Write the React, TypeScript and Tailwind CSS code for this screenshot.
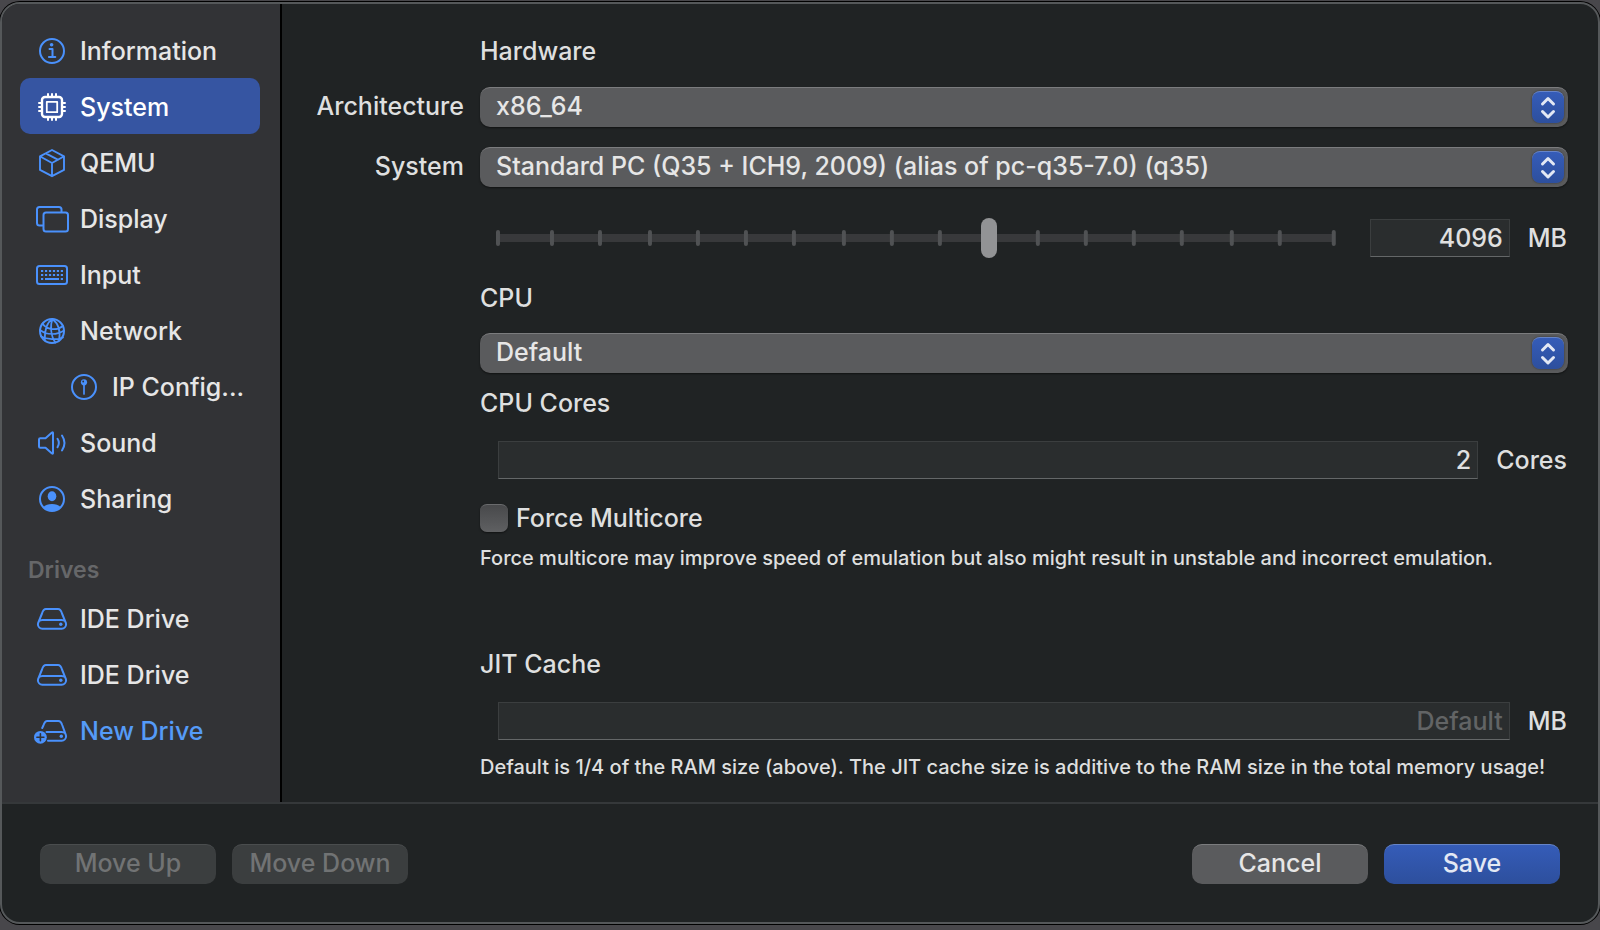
import type { ComponentType, ReactNode } from "react";

function Svg({ children }: { children: ReactNode }) {
  return (
    <svg
      width="36"
      height="32"
      viewBox="0 0 36 32"
      fill="none"
      stroke="currentColor"
      strokeWidth="2"
      strokeLinecap="round"
      strokeLinejoin="round"
      aria-hidden="true"
      className="shrink-0"
    >
      {children}
    </svg>
  );
}

const InfoIcon = () => (
  <Svg>
    <circle cx="18" cy="16" r="12" />
    <circle cx="17.6" cy="9.8" r="1.8" fill="currentColor" stroke="none" />
    <path d="M15.5 14h3v7.5M14.9 21.900h6.400" />
  </Svg>
);

const ChipIcon = () => (
  <Svg>
    <rect x="8" y="6" width="20" height="20" rx="3" strokeWidth="2.400" />
    <rect x="12.800" y="10.800" width="10.400" height="10.400" strokeWidth="1.800" />
    <path d="M14 3v3M18 3v3M22 3v3M14 26v3M18 26v3M22 26v3M5 12h3M5 16h3M5 20h3M28 12h3M28 16h3M28 20h3" />
  </Svg>
);

const BoxIcon = () => (
  <Svg>
    <path
      d="M18 3l12 6.300v13.600L18 29.200 6 22.900V9.300zM6.300 9.500L18 16l11.700-6.500M18 16v13M11.800 6.400l12 6.300"
      strokeWidth="1.900"
    />
  </Svg>
);

const DisplayIcon = () => (
  <Svg>
    <path d="M8.500 22.500H5.500a2.500 2.500 0 0 1-2.500-2.500V6.500A2.500 2.500 0 0 1 5.500 4h19.500a2.500 2.500 0 0 1 2.500 2.500v2.500" />
    <rect x="9.500" y="9.500" width="24.500" height="19" rx="2.500" />
  </Svg>
);

const KeyboardIcon = () => (
  <Svg>
    <rect x="3" y="7" width="30" height="18" rx="2.500" />
    <path d="M7 12h22M7 16h22" strokeWidth="2.200" strokeLinecap="butt" strokeDasharray="2.200 1.760" />
    <path d="M7 20h2.200M11 20h14M26.800 20h2.200" strokeWidth="2.200" strokeLinecap="butt" />
  </Svg>
);

const GlobeIcon = () => (
  <Svg>
    <circle cx="18" cy="16" r="12" />
    <path
      strokeWidth="1.700"
      d="M18.500 4C13.500 7 10.500 14.500 10.800 25.500M18.500 4c-2.500 6-2 17 3 23.500M18.500 4c5 4 8.500 11 6.500 21.500M8.500 8.500c4 6.500 14 7.500 20.500 2.500M6 15c5 3.500 7 4 12 4 5 0 9-1.500 12-3.500M7 21.500c6 3 16 3.500 22 1"
    />
  </Svg>
);

const PinIcon = () => (
  <Svg>
    <circle cx="18" cy="16" r="12" />
    <circle cx="18" cy="11.300" r="3.100" fill="currentColor" stroke="none" />
    <path d="M18 13v10" strokeWidth="1.700" />
    <circle cx="17.200" cy="10.500" r="0.900" fill="#323336" stroke="none" />
  </Svg>
);

const SoundIcon = () => (
  <Svg>
    <path d="M5 12.500a1.300 1.300 0 0 1 1.300-1.300h5.200L18 5.500q1-.700 1 .5v20q0 1.200-1 .5l-6.500-5.700H6.300A1.300 1.300 0 0 1 5 19.500z" />
    <path d="M23.500 11.800q2.700 4.200 0 8.400M28 8.500q5 7.500 0 15" />
  </Svg>
);

const PersonIcon = () => (
  <Svg>
    <circle cx="18" cy="16" r="12" />
    <ellipse cx="18" cy="13.300" rx="4.300" ry="5" fill="currentColor" stroke="none" />
    <path
      d="M9.200 24.300q3.300-3.300 8.800-3.300t8.800 3.300q-3.500 3.700-8.800 3.700t-8.800-3.700z"
      fill="currentColor"
      stroke="none"
    />
  </Svg>
);

const DriveIcon = () => (
  <Svg>
    <path d="M4.200 19.800l3.800-9.300Q9.300 6 12 6h12q2.700 0 4 4.500l3.800 9.300M8.300 16.900h19.400a4.400 4.400 0 0 1 0 8.800h-19.400a4.400 4.400 0 0 1 0-8.800z" />
    <circle cx="26.800" cy="21.300" r="1.700" fill="currentColor" stroke="none" />
  </Svg>
);

const NewDriveIcon = () => (
  <Svg>
    <path d="M8.200 13l1.200-2.500Q10.800 6 13.300 6h11.200q2.500 0 3.700 4l3.600 9.800M12.500 16.900h15.200a4.400 4.400 0 0 1 0 8.800H14" />
    <circle cx="27.300" cy="21.300" r="1.700" fill="currentColor" stroke="none" />
    <circle cx="6.400" cy="22.300" r="6.400" fill="currentColor" stroke="none" />
    <path d="M6.400 18.800v7M2.900 22.300h7" stroke="#323336" strokeWidth="1.600" />
  </Svg>
);

type Item = {
  label: string;
  icon: ComponentType;
  selected?: boolean;
  nested?: boolean;
  accent?: boolean;
};

const settings: Item[] = [
  { label: "Information", icon: InfoIcon },
  { label: "System", icon: ChipIcon, selected: true },
  { label: "QEMU", icon: BoxIcon },
  { label: "Display", icon: DisplayIcon },
  { label: "Input", icon: KeyboardIcon },
  { label: "Network", icon: GlobeIcon },
  { label: "IP Config...", icon: PinIcon, nested: true },
  { label: "Sound", icon: SoundIcon },
  { label: "Sharing", icon: PersonIcon },
];

const drives: Item[] = [
  { label: "IDE Drive", icon: DriveIcon },
  { label: "IDE Drive", icon: DriveIcon },
  { label: "New Drive", icon: NewDriveIcon, accent: true },
];

function NavList({ items }: { items: Item[] }) {
  return (
    <ul>
      {items.map(({ label, icon: Icon, selected, nested, accent }, i) => (
        <li key={i}>
          <button
            type="button"
            aria-current={selected ? "page" : undefined}
            className={
              "flex h-14 w-full items-center gap-2.5 rounded-[10px] pt-0.5 text-left whitespace-nowrap " +
              (nested ? "pl-[46px] " : "pl-3.5 ") +
              (selected ? "bg-[#3655a2] text-white" : accent ? "text-[#559bf8]" : "text-[#e6e6e6]")
            }
          >
            <span className={selected ? "text-white" : "text-[#4a91fc]"}>
              <Icon />
            </span>
            {label}
          </button>
        </li>
      ))}
    </ul>
  );
}

function PopUp({ id, value }: { id: string; value: string }) {
  return (
    <div className="relative h-10 w-full">
      <select
        id={id}
        className="h-10 w-full appearance-none rounded-[10px] border-t border-[#7b7c7e] bg-[#5a5b5d] pr-12 pb-1 pl-4 text-[#e6e6e6] shadow-[0_1px_2px_rgba(0,0,0,0.5)]"
      >
        <option>{value}</option>
      </select>
      <span className="pointer-events-none absolute top-1 right-1 flex size-8 items-center justify-center rounded-lg border-t border-[#6684c8] bg-linear-to-b from-[#355cb8] to-[#2d4f9d] shadow-[0_0_2px_rgba(0,0,0,0.5)]">
        <svg
          width="16"
          height="24"
          viewBox="0 0 16 24"
          fill="none"
          stroke="#e3e8f4"
          strokeWidth="3"
          strokeLinecap="round"
          strokeLinejoin="round"
          aria-hidden="true"
        >
          <path d="M2.500 8L8 2.500 13.500 8M2.500 15.500L8 21l5.500-5.500" />
        </svg>
      </span>
    </div>
  );
}

const fieldClass =
  "h-[38px] min-w-0 border border-[#3b3e3f] border-b-[#646768] bg-[#2a2d2e] pr-1.5 text-right text-[#e0e0e0] placeholder:text-[#626465]";

const ticks = [0, 54, 102, 152, 200, 248, 296, 346, 394, 442, 492, 540, 588, 636, 684, 734, 782, 836];

function MemorySlider() {
  return (
    <div className="relative h-10 flex-1">
      <svg className="h-10 w-full" viewBox="0 0 840 40" preserveAspectRatio="none" aria-hidden="true">
        <rect x="2" y="16" width="836" height="8" fill="#38393b" />
        {ticks.map((x) => (
          <rect key={x} x={x} y="12" width="4" height="16" rx="2" fill="#505254" />
        ))}
      </svg>
      <input
        type="range"
        aria-label="Memory size"
        min={0}
        max={824}
        defaultValue={485}
        className="absolute inset-0 h-10 w-full appearance-none bg-transparent [&::-webkit-slider-thumb]:h-10 [&::-webkit-slider-thumb]:w-4 [&::-webkit-slider-thumb]:appearance-none [&::-webkit-slider-thumb]:rounded-full [&::-webkit-slider-thumb]:bg-[#929395]"
      />
    </div>
  );
}

const pushButton = "h-10 w-44 rounded-[10px] border-t pb-1 ";

export default function App() {
  return (
    <div className="min-h-screen bg-[#48474b] pt-0.5 font-[Inter,sans-serif] text-[25px] leading-8 font-medium text-[#dedfdf]">
      <div className="flex min-h-[922px] flex-col overflow-hidden rounded-[20px] border-2 border-[#55585a] bg-[#202324] shadow-[0_0_0_1px_#000]">
        <div className="flex flex-1 border-b-2 border-[#35383a]">
          <nav aria-label="Settings" className="w-70 shrink-0 border-r-2 border-black bg-[#323336] pt-[18px] pr-5 pl-[18px]">
            <NavList items={settings} />
            <h2 className="mt-7 mb-1 px-2 text-[23px] font-semibold text-[#666769]">Drives</h2>
            <NavList items={drives} />
          </nav>

          <main className="grid flex-1 grid-cols-[150px_1fr] content-start gap-x-4 pt-[31px] pr-[30px] pl-8">
            <h2 className="col-start-2">Hardware</h2>

            <label htmlFor="arch" className="mt-5 self-center pb-0.5 text-right">Architecture</label>
            <div className="mt-5"><PopUp id="arch" value="x86_64" /></div>

            <label htmlFor="system" className="mt-5 self-center pb-0.5 text-right">System</label>
            <div className="mt-5"><PopUp id="system" value="Standard PC (Q35 + ICH9, 2009) (alias of pc-q35-7.0) (q35)" /></div>

            <div className="col-start-2 mt-[31px] flex items-center pr-px pl-4">
              <MemorySlider />
              <input id="memory" type="text" defaultValue="4096" className={fieldClass + " ml-[34px] w-35"} />
              <label htmlFor="memory" className="ml-[18px]">MB</label>
            </div>

            <label htmlFor="cpu" className="col-start-2 mt-6">CPU</label>
            <div className="col-start-2 mt-[19px]"><PopUp id="cpu" value="Default" /></div>

            <h2 className="col-start-2 mt-3.5">CPU Cores</h2>
            <div className="col-start-2 mt-[22px] flex items-center pr-px pl-[18px]">
              <input id="cores" type="text" defaultValue="2" className={fieldClass + " flex-1"} />
              <label htmlFor="cores" className="ml-[18px]">Cores</label>
            </div>

            <label className="col-start-2 mt-[23px] flex items-center gap-2">
              <input
                type="checkbox"
                className="size-7 appearance-none rounded-[7px] border-t border-[#6a6b6d] bg-linear-to-b from-[#48494b] to-[#5f6062] shadow-[0_1px_2px_rgba(0,0,0,0.5)]"
              />
              Force Multicore
            </label>
            <p className="col-start-2 mt-2 text-[20px]">
              Force multicore may improve speed of emulation but also might result in unstable and incorrect emulation.
            </p>

            <h2 className="col-start-2 mt-[74px]">JIT Cache</h2>
            <div className="col-start-2 mt-[22px] flex items-center pr-px pl-[18px]">
              <input id="jit" type="text" aria-label="JIT cache size" placeholder="Default" className={fieldClass + " flex-1"} />
              <label htmlFor="jit" className="ml-[18px]">MB</label>
            </div>
            <p className="col-start-2 mt-[11px] text-[20px]">
              Default is 1/4 of the RAM size (above). The JIT cache size is additive to the RAM size in the total memory usage!
            </p>
          </main>
        </div>

        <footer className="flex h-[118px] items-center gap-4 px-[38px] pt-0.5">
          <button type="button" disabled className={pushButton + "border-[#4a4d4e] bg-[#3b3e3f] text-[#717374]"}>Move Up</button>
          <button type="button" disabled className={pushButton + "border-[#4a4d4e] bg-[#3b3e3f] text-[#717374]"}>Move Down</button>
          <button type="button" className={pushButton + "ml-auto border-[#7b7c7e] bg-[#5a5b5d] text-[#e6e6e6]"}>Cancel</button>
          <button type="button" className={pushButton + "border-[#6684c8] bg-linear-to-b from-[#355cb8] to-[#2d4f9d] text-[#e3e8f4]"}>Save</button>
        </footer>
      </div>
    </div>
  );
}
